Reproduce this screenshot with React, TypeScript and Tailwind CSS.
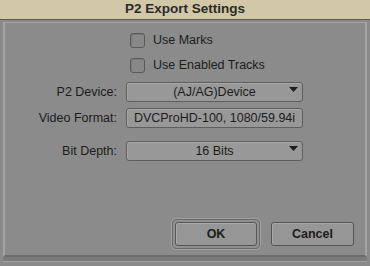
import React from "react";

function Arrow() {
  return (
    <svg width="9" height="5" viewBox="0 0 9 5" className="absolute right-[4px] top-[4px]">
      <path d="M0 0 H9 L4.5 5 Z" fill="#1e1e1e" />
    </svg>
  );
}

function Box({ children, arrow }: { children: React.ReactNode; arrow?: boolean }) {
  return (
    <div className="relative w-[177px] h-[20px] rounded-[3px] border border-[#5e5e5e] bg-[#989898] shadow-[inset_1px_1px_0_#a8a8a8] flex items-center justify-center text-[12.5px] text-[#1c1c1c] leading-none">
      {children}
      {arrow && <Arrow />}
    </div>
  );
}

function Check({ label }: { label: string }) {
  return (
    <div className="flex items-center gap-[8px]">
      <div className="w-[15px] h-[15px] rounded-[3px] border border-[#5a5a5a] bg-[#888888] shadow-[inset_1px_1px_0_#7a7a7a]" />
      <span className="text-[12.5px] text-[#1c1c1c] leading-none">{label}</span>
    </div>
  );
}

export default function App() {
  return (
    <div
      className="w-[370px] h-[266px] bg-[#8a8a8a] flex flex-col overflow-hidden"
      style={{ fontFamily: '"Liberation Sans", Arial, sans-serif' }}
    >
      <div className="h-[20px] bg-[#d2c7a6] border-b border-[#5d5a52] flex items-center justify-center text-[13.5px] font-bold text-[#2b2b2b]">
        P2 Export Settings
      </div>
      <div className="flex-1 flex flex-col px-[3px] pt-[2px]">
        <div className="h-[235px] border-l-2 border-t border-[#a4a4a4] border-r-2 border-r-[#a4a4a4] border-b-2 border-b-[#6c6c6c] bg-[#8b8b8b] flex flex-col">
          <div className="pl-[125px] pt-[10px] flex flex-col gap-[10px]">
            <Check label="Use Marks" />
            <Check label="Use Enabled Tracks" />
          </div>
          <div className="mt-[9px] grid grid-cols-[112px_177px] gap-x-[9px] items-center">
            <span className="text-right text-[12.5px] text-[#1c1c1c] leading-none">P2 Device:</span>
            <Box arrow>(AJ/AG)Device</Box>
            <span className="mt-[6px] text-right text-[12.5px] text-[#1c1c1c] leading-none">Video Format:</span>
            <div className="mt-[6px]">
              <Box>DVCProHD-100, 1080/59.94i</Box>
            </div>
            <span className="mt-[13px] text-right text-[12.5px] text-[#1c1c1c] leading-none">Bit Depth:</span>
            <div className="mt-[13px]">
              <Box arrow>16 Bits</Box>
            </div>
          </div>
          <div className="flex-1" />
          <div className="flex justify-end gap-[11px] pr-[11px] pb-[6px]">
            <div className="p-[2px] rounded-[4px] border border-[#6a6a6a] bg-[#8f8f8f] shadow-[0_0_0_1px_#a0a0a0]">
              <div className="w-[82px] h-[24px] rounded-[3px] border border-[#555] bg-[#969696] shadow-[inset_1px_1px_0_#a9a9a9] flex items-center justify-center text-[12.5px] font-bold text-[#1c1c1c]">
                OK
              </div>
            </div>
            <div className="self-center w-[83px] h-[24px] rounded-[3px] border border-[#555] bg-[#969696] shadow-[inset_1px_1px_0_#a9a9a9] flex items-center justify-center text-[12.5px] font-bold text-[#1c1c1c]">
              Cancel
            </div>
          </div>
        </div>
        <div className="h-[4px] bg-[#7a7a7a]" />
        <div className="h-[1px] bg-[#a0a0a0]" />
      </div>
    </div>
  );
}
